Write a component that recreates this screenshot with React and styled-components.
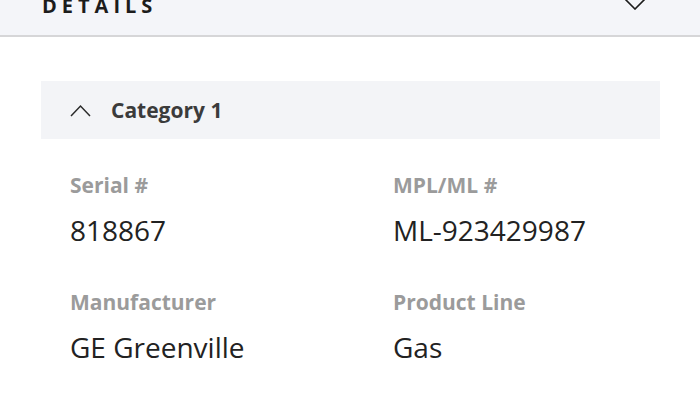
import React from 'react';
import styled, { createGlobalStyle } from 'styled-components';

const GlobalStyle = createGlobalStyle`
  html, body {
    margin: 0;
    padding: 0;
    background: #fff;
    font-family: 'Open Sans', 'Noto Sans', sans-serif;
  }
`;

const Page = styled.div`
  width: 700px;
  height: 416px;
  overflow: hidden;
  background: #fff;
`;

const Header = styled.header`
  height: 37px;
  box-sizing: border-box;
  display: flex;
  align-items: flex-end;
  justify-content: space-between;
  padding: 0 53px 20px 42px;
  background: #f4f5f9;
  border-bottom: 2px solid #d6d6d8;
  overflow: hidden;
`;

const HeaderTitle = styled.h2`
  margin: 0;
  font-size: 20px;
  line-height: 18px;
  font-weight: 700;
  letter-spacing: 5px;
  color: #1c1c1c;
`;

const HeaderToggle = styled.svg`
  margin-bottom: 5px;
`;

const Body = styled.section`
  padding: 44px 40px 0 41px;
`;

const Category = styled.div`
  background: #f3f4f7;
`;

const CategoryHead = styled.div`
  height: 58px;
  display: flex;
  align-items: center;
  gap: 20px;
  padding-left: 29px;
  font-size: 21px;
  line-height: 28px;
  font-weight: 700;
  color: #3b3b3b;
`;

const Fields = styled.div`
  display: grid;
  grid-template-columns: 323px 1fr;
  row-gap: 40px;
  padding: 32px 0 0 29px;
  background: #fff;
`;

const Field = styled.div`
  display: flex;
  flex-direction: column;
  gap: 13px;
`;

const Label = styled.span`
  font-size: 21px;
  line-height: 28px;
  font-weight: 700;
  color: #9b9b9b;
`;

const Value = styled.span`
  font-size: 28px;
  line-height: 36px;
  font-weight: 400;
  color: #222;
`;

const ChevronDown = () => (
  <HeaderToggle width="24" height="13" viewBox="0 0 24 13" fill="none">
    <polyline points="1,1 12,12 23,1" stroke="#1c1c1c" strokeWidth="1.6" />
  </HeaderToggle>
);

const ChevronUp = () => (
  <svg width="21" height="13" viewBox="0 0 21 13" fill="none">
    <polyline points="1,12 10.5,2 20,12" stroke="#2a2a2a" strokeWidth="1.5" />
  </svg>
);

const details = [
  { label: 'Serial #', value: '818867' },
  { label: 'MPL/ML #', value: 'ML-923429987' },
  { label: 'Manufacturer', value: 'GE Greenville' },
  { label: 'Product Line', value: 'Gas' },
];

const App = () => (
  <Page>
    <GlobalStyle />
    <Header>
      <HeaderTitle>DETAILS</HeaderTitle>
      <ChevronDown />
    </Header>
    <Body>
      <Category>
        <CategoryHead>
          <ChevronUp />
          Category 1
        </CategoryHead>
      </Category>
      <Fields>
        {details.map((d) => (
          <Field key={d.label}>
            <Label>{d.label}</Label>
            <Value>{d.value}</Value>
          </Field>
        ))}
      </Fields>
    </Body>
  </Page>
);

export default App;
